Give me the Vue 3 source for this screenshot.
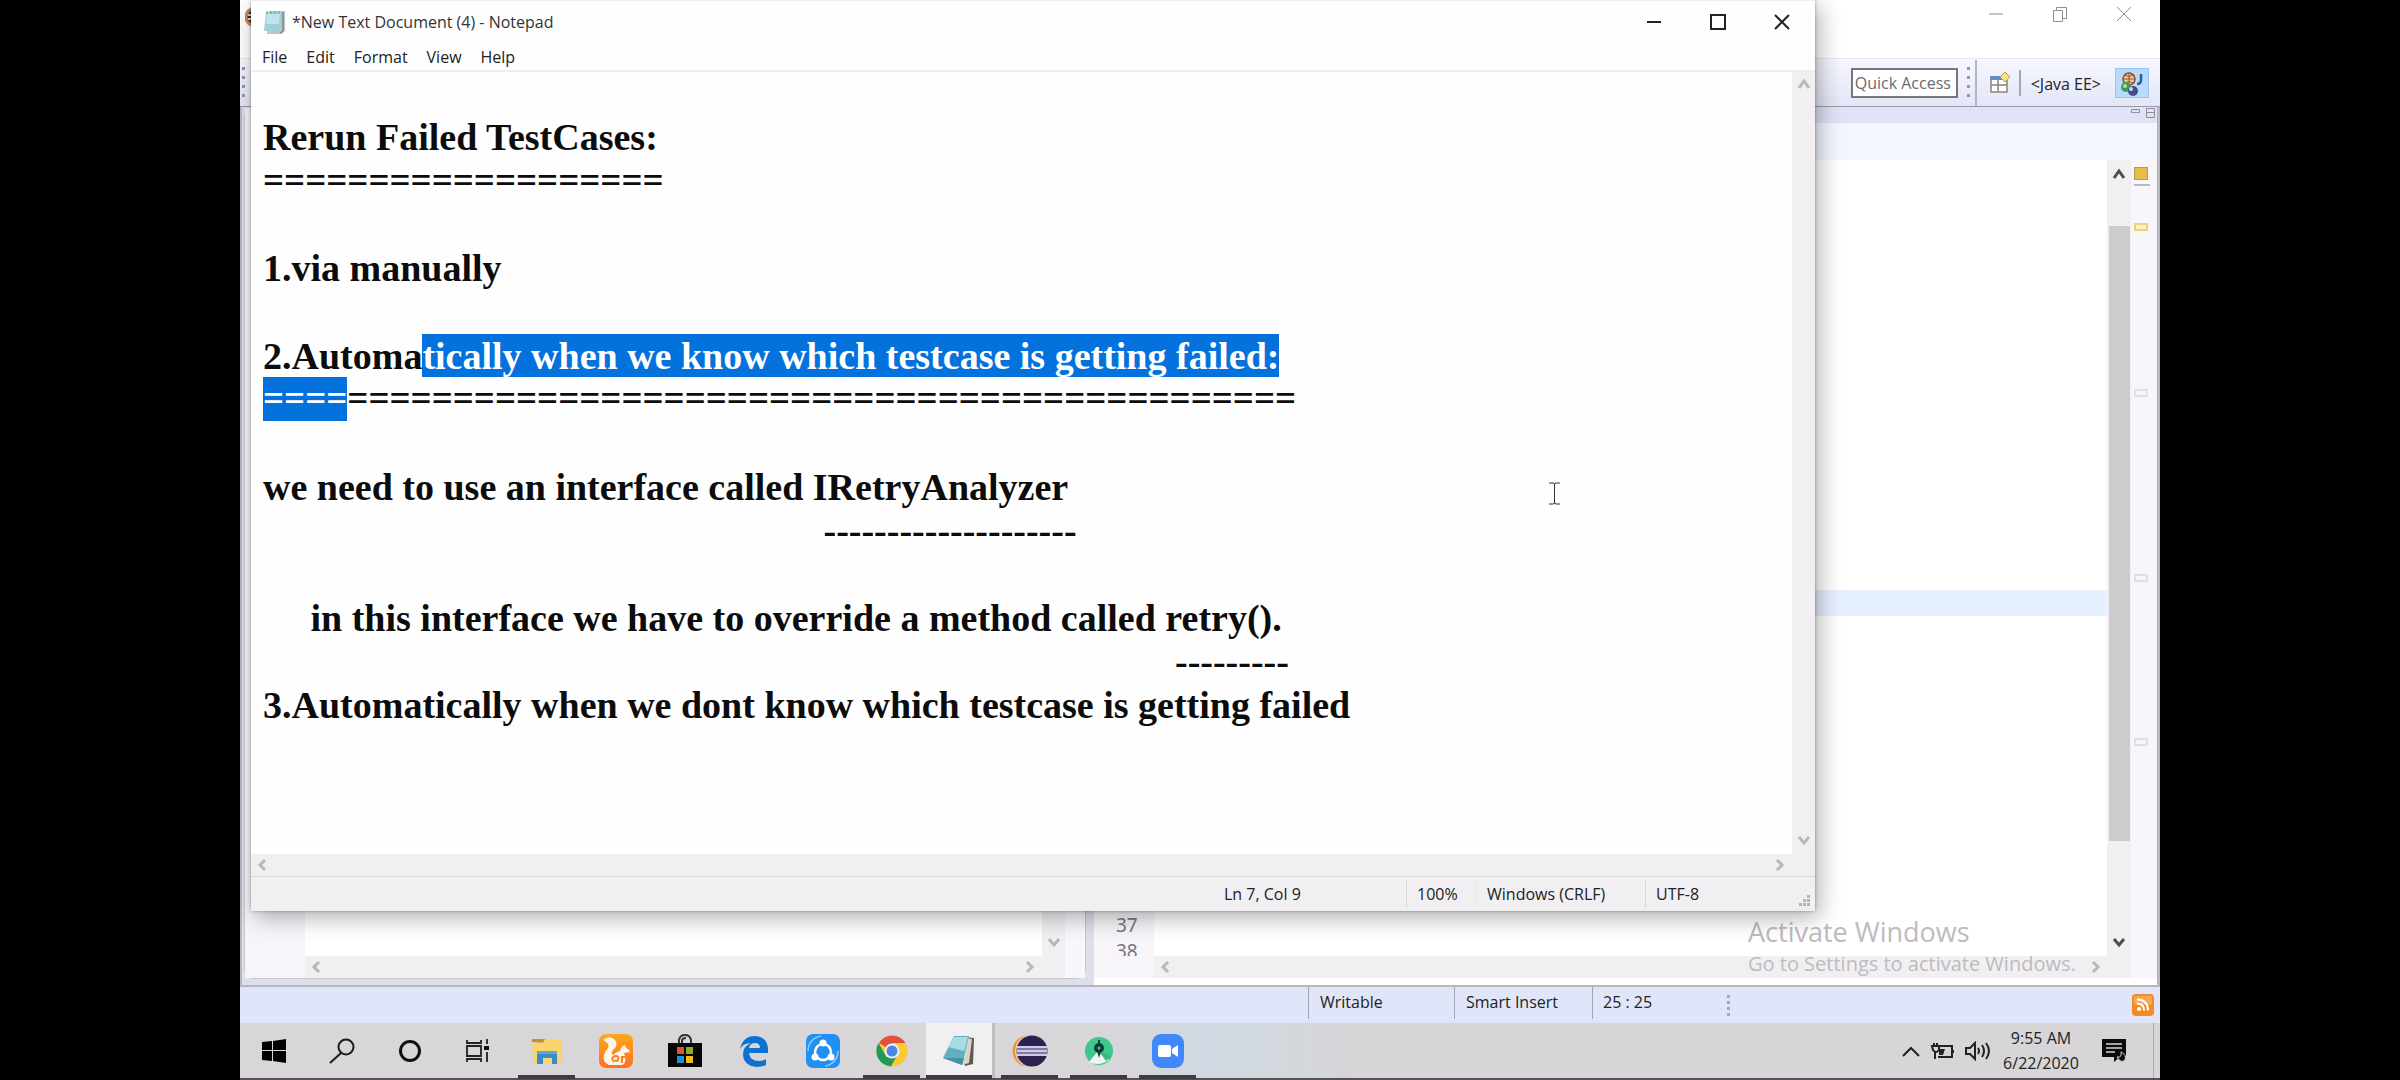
<script setup>
const eq = (n) => '='.repeat(n)
const pad = (n, s) => ' '.repeat(n) + s

const lines = [
  [],
  [{ t: 'Rerun Failed TestCases:' }],
  [{ t: eq(19), rule: true }],
  [],
  [{ t: '1.via manually' }],
  [],
  [{ t: '2.Automa' }, { t: 'tically when we know which testcase is getting failed:', sel: true }],
  [{ t: eq(4), sel: true, rule: true }, { t: eq(45), rule: true }],
  [],
  [{ t: 'we need to use an interface called IRetryAnalyzer' }],
  [{ t: pad(59, '-'.repeat(20)) }],
  [],
  [{ t: pad(5, 'in this interface we have to override a method called retry().') }],
  [{ t: pad(96, '-'.repeat(9)) }],
  [{ t: '3.Automatically when we dont know which testcase is getting failed' }],
  [],
  [],
]
const menus = ['File', 'Edit', 'Format', 'View', 'Help']
</script>

<template>
  <div class="page">
    <div class="desktop">
      <!-- IDE window -->
      <section class="ide">
        <header class="ide-title">
          <svg class="ide-logo" width="20" height="22" viewBox="0 0 20 22"><circle cx="10" cy="11" r="9" fill="#3a2a3c" stroke="#c98a4e" stroke-width="3" /><path d="M3 9h14M3 13h14" stroke="#d9cdd8" stroke-width="2" /></svg>
          <span class="grow"></span>
          <button class="ctl" aria-label="Minimize"><svg width="16" height="16"><path d="M1 8h14" /></svg></button>
          <button class="ctl" aria-label="Restore"><svg width="16" height="16"><path d="M1.500 4.500h9v11h-9zM4.500 4V1.500h10v11H11" /></svg></button>
          <button class="ctl" aria-label="Close"><svg width="16" height="16"><path d="M1 1l14 14M15 1L1 15" /></svg></button>
        </header>
        <div class="ide-tools">
          <span class="strip-dots left-dots"></span>
          <span class="grow"></span>
          <input class="quick" type="text" placeholder="Quick Access" aria-label="Quick Access" />
          <span class="strip-dots"></span>
          <span class="tool-edge"></span>
          <button class="tool" aria-label="Open Perspective">
            <svg width="22" height="24" viewBox="0 0 22 24">
              <path d="M2 6h16v15H2z" fill="#fff" stroke="#8a8578" stroke-width="1.500" />
              <path d="M1 5h14v4H1z" fill="#5f8fc4" />
              <path d="M2 14h16M9 9v12" stroke="#8a8578" stroke-width="1.500" />
              <path d="M16 1l5 5-5 5-5-5z" fill="#f6e48b" stroke="#b99b3a" />
            </svg>
          </button>
          <span class="tool-sep"></span>
          <button class="tool persp">&lt;Java EE&gt;</button>
          <button class="tool active" aria-label="Java">
            <svg width="26" height="28" viewBox="0 0 26 28">
              <circle cx="10" cy="10" r="6" fill="#e9c9a0" stroke="#8b4a30" stroke-width="1.500" />
              <path d="M4 10h12M10 4v12M6 6q4 3 8 0M6 14q4-3 8 0" fill="none" stroke="#a5522f" />
              <circle cx="7" cy="18" r="5" fill="#3f9a58" /><circle cx="6" cy="17" r="2" fill="#a8dfae" />
              <path d="M22 5v6q0 4-4 4" fill="none" stroke="#2f5f97" stroke-width="2.500" />
              <circle cx="14" cy="22" r="5" fill="#3d4f86" /><circle cx="12" cy="20" r="2" fill="#cfd8f0" />
            </svg>
          </button>
        </div>
        <div class="ide-main">
          <div class="pane side">
            <div class="pane-view">
              <div class="gutter"></div>
              <div class="sheet"></div>
              <div class="vbar"><span class="grow"></span><svg class="chev" width="14" height="14"><path d="M2 4l5 6 5-6" /></svg></div>
              <div class="edge"></div>
            </div>
            <div class="pane-foot">
              <div class="gutter"></div>
              <div class="hbar">
                <svg class="chev" width="14" height="14"><path d="M9 2L4 7l5 5" /></svg>
                <svg class="chev" width="14" height="14"><path d="M5 2l5 5-5 5" /></svg>
              </div>
              <div class="corner"></div>
              <div class="edge"></div>
            </div>
          </div>
          <div class="pane editor">
            <div class="tabs">
              <svg width="28" height="12"><path d="M2.500 2.500h8v3h-8zM17.500 1.500h8v9h-8zM17.500 5.500h8" /></svg>
            </div>
            <div class="subtabs"></div>
            <div class="pane-view">
              <div class="gutter nums"><span>37</span><span>38</span></div>
              <div class="sheet"><div class="current"></div></div>
              <div class="vbar wide">
                <svg class="chev dark" width="14" height="14"><path d="M2 11l5-7 5 7" /></svg>
                <div class="thumb"></div>
                <svg class="chev dark" width="14" height="14"><path d="M2 4l5 6 5-6" /></svg>
              </div>
              <div class="marks">
                <i class="warn"></i><i class="rule"></i><i class="mk hot"></i><i class="mk m2"></i><i class="mk m3"></i><i class="mk m4"></i>
              </div>
            </div>
            <div class="pane-foot">
              <div class="gutter"></div>
              <div class="hbar">
                <svg class="chev" width="14" height="14"><path d="M9 2L4 7l5 5" /></svg>
                <svg class="chev" width="14" height="14"><path d="M5 2l5 5-5 5" /></svg>
              </div>
              <div class="corner"></div>
              <div class="edge"></div>
            </div>
          </div>
        </div>
        <footer class="ide-status">
          <span class="cell writable">Writable</span>
          <span class="cell insert">Smart Insert</span>
          <span class="cell pos">25 : 25</span>
          <span class="strip-dots"></span>
          <span class="grow"></span>
          <svg width="22" height="22" viewBox="0 0 22 22">
            <rect width="22" height="22" rx="4" fill="#f28c22" /><rect x="2" y="2" width="18" height="9" rx="2" fill="#f8a850" />
            <circle cx="7" cy="15" r="2" fill="#fff" />
            <path d="M5 9.500q7 0 7 7M5 5.500q11 0 11 11" fill="none" stroke="#fff" stroke-width="2" />
          </svg>
        </footer>
      </section>

      <div class="watermark">
        <p class="wm-big">Activate Windows</p>
        <p class="wm-small">Go to Settings to activate Windows.</p>
      </div>

      <!-- Notepad window -->
      <section class="notepad">
        <header class="np-title">
          <svg width="24" height="26" viewBox="0 0 24 26">
            <path d="M6 2h16v20l-3 3H4z" fill="#b9c6c8" /><path d="M3 3h16l-2 19H1z" fill="#9fd0da" />
            <path d="M4 5h13l-1 10H3z" fill="#c0e4ea" /><path d="M20 3v19l-3 2" fill="none" stroke="#5d6d70" />
            <path d="M4 2v3M8 2v3M12 2v3M16 2v3" stroke="#7a9298" />
          </svg>
          <h1>*New Text Document (4) - Notepad</h1>
          <span class="grow"></span>
          <button class="ctl" aria-label="Minimize"><svg width="16" height="16"><path d="M1 8h14" /></svg></button>
          <button class="ctl" aria-label="Maximize"><svg width="16" height="16"><path d="M1 1h14v14H1z" /></svg></button>
          <button class="ctl" aria-label="Close"><svg width="16" height="16"><path d="M1 1l14 14M15 1L1 15" /></svg></button>
        </header>
        <nav class="np-menu"><button v-for="m in menus" :key="m">{{ m }}</button></nav>
        <div class="np-body">
          <div class="np-text">
            <div v-for="(line, i) in lines" :key="i" class="line"><span v-for="(s, j) in line" :key="j" :class="{ sel: s.sel, eq: s.rule }">{{ s.t }}</span></div>
          </div>
          <div class="np-vbar">
            <svg class="chev" width="14" height="14"><path d="M2 11l5-7 5 7" /></svg>
            <svg class="chev" width="14" height="14"><path d="M2 4l5 6 5-6" /></svg>
          </div>
        </div>
        <div class="np-hbar">
          <svg class="chev" width="14" height="14"><path d="M9 2L4 7l5 5" /></svg>
          <svg class="chev" width="14" height="14"><path d="M5 2l5 5-5 5" /></svg>
        </div>
        <footer class="np-status">
          <span class="c1">Ln 7, Col 9</span><span class="c2">100%</span><span class="c3">Windows (CRLF)</span><span class="c4">UTF-8</span>
          <svg class="grip" width="12" height="12" fill="#b5b3b6"><path d="M8 0h3v3H8zM4 4h3v3H4zM8 4h3v3H8zM0 8h3v3H0zM4 8h3v3H4zM8 8h3v3H8z" /></svg>
        </footer>
        <svg class="ibeam" width="11" height="23"><path d="M0 1h4M7 1h4M0 22h4M7 22h4M4 1q1.500 0 1.500 2v17q0 2-1.500 2M7 1q-1.500 0-1.500 2v17q0 2 1.500 2" /></svg>
      </section>

      <!-- Taskbar -->
      <footer class="taskbar">
        <button class="tb sys" aria-label="Start"><svg width="24" height="24" viewBox="0 0 24 24"><path d="M0 3l10-1v9H0zM11 2l13-2v11H11zM0 12h10v10L0 21zM11 12h13v12l-13-2z" /></svg></button>
        <button class="tb sys" aria-label="Search"><svg width="26" height="26" viewBox="0 0 26 26" fill="none" stroke="#1c1c1c" stroke-width="2"><circle cx="17" cy="9" r="7.500" /><path d="M12 15L1 25" /></svg></button>
        <button class="tb sys" aria-label="Cortana"><svg width="24" height="24" viewBox="0 0 24 24"><circle cx="12" cy="12" r="9.500" fill="none" stroke="#111" stroke-width="3" /></svg></button>
        <button class="tb sys" aria-label="Task View"><svg width="24" height="24" viewBox="0 0 24 24" fill="none" stroke="#222" stroke-width="1.800"><path d="M1 7h14v10H1zM1 1v3h14V1M1 23v-3h14v3M21 0v5M21 13v10" /><path d="M18 7h5v4h-5z" fill="#111" stroke="none" /></svg></button>
        <button class="tb open" aria-label="File Explorer">
          <svg width="32" height="28" viewBox="0 0 32 28"><path d="M1 5V3q0-1 1-1h13v4z" fill="#c58f2a" /><path d="M14 2h17v24H3L1 6h11z" fill="#fbd56b" /><path d="M6 15q0-1 1-1h18q1 0 1 1v12h-5v-6h-9v6H6z" fill="#3a8bc7" /><path d="M6 14h20v3H6z" fill="#58a8de" /></svg>
        </button>
        <button class="tb" aria-label="UC Browser">
          <svg width="34" height="34" viewBox="0 0 34 34"><defs><linearGradient id="uc" x1="0" y1="0" x2="0" y2="1"><stop offset="0" stop-color="#fba91d" /><stop offset="1" stop-color="#ff7021" /></linearGradient></defs><rect width="34" height="34" rx="7" fill="url(#uc)" /><path d="M4 6q6-5 11-1 5 5 0 10-4 4-1 6 3-3 7-4 1-5 5-6l1 3q3 1 4 4l-6 1q3 7 0 11l-2 1H10q-7-3-5-10 1-4 4-7 2-5-5-8z" fill="#fff4e6" /><path d="M15 28q-4-4 1-6 5 0 3 4-2 2-3 0M23 29v-6h3" fill="none" stroke="#f77f24" stroke-width="2" /></svg>
        </button>
        <button class="tb" aria-label="Microsoft Store">
          <svg width="34" height="34" viewBox="0 0 34 34"><path d="M11 10V6q1-5 6-5t6 5v4M14 10V7q0-3 4-3" fill="none" stroke="#333" stroke-width="2" /><path d="M0 9h34v24H0z" fill="#060606" /><path d="M9 13h7v7H9z" fill="#e2552b" /><path d="M18 13h7v7h-7z" fill="#8fae1b" /><path d="M9 22h7v7H9z" fill="#1a92da" /><path d="M18 22h7v7h-7z" fill="#f4b91a" /></svg>
        </button>
        <button class="tb" aria-label="Edge">
          <svg width="30" height="32" viewBox="0 0 30 32"><path d="M1 14Q4 1 16 1q13 1 13 14v3H10q1 8 10 8 4 0 7-2v6q-4 2-9 2Q5 31 4 20 4 11 12 8 4 8 1 14zM10 13h11q0-5-5-5-5 0-6 5z" fill="#0b72cf" fill-rule="evenodd" /></svg>
        </button>
        <button class="tb" aria-label="SHAREit">
          <svg width="34" height="34" viewBox="0 0 34 34"><rect width="34" height="34" rx="7" fill="#2190f3" /><path d="M2 17A15 15 0 0 1 15 2M32 17a15 15 0 0 1-13 15" fill="none" stroke="#8fcaff" stroke-width="1.500" /><circle cx="17" cy="18" r="8" fill="none" stroke="#fff" stroke-width="2.500" /><g fill="#fff"><circle cx="17" cy="9" r="3.500" /><circle cx="9" cy="23" r="3.500" /><circle cx="25" cy="23" r="3.500" /></g></svg>
        </button>
        <button class="tb open" aria-label="Chrome">
          <svg width="32" height="32" viewBox="0 0 32 32"><circle cx="16" cy="16" r="15.500" fill="#fcc934" /><path d="M16 16L3 8A15.500 15.500 0 0 1 29.500 8H16z" fill="#e2513f" /><path d="M2.500 8l8 14 5 9.400A15.500 15.500 0 0 1 2.500 8z" fill="#22995a" /><path d="M22 19l-7 12.500L10 22z" fill="#22995a" /><circle cx="16" cy="16" r="7.500" fill="#f1f1f1" /><circle cx="16" cy="16" r="5.500" fill="#4a86ec" /></svg>
        </button>
        <button class="tb open current-app" aria-label="Notepad">
          <svg width="34" height="34" viewBox="0 0 34 34"><path d="M13 2l19 2-1 26-8 2z" fill="#5f5a50" /><path d="M14 2l16 3-3 24-7 2z" fill="#d8d4c8" /><path d="M12 2h15l-7 29-19-7z" fill="#62b0bf" /><path d="M12 3h14l-4 14-16-4z" fill="#a8dbe2" /><path d="M1 24l19 7 2-7z" fill="#3f93a4" /></svg>
        </button>
        <button class="tb open" aria-label="Eclipse">
          <svg width="36" height="34" viewBox="0 0 36 34"><circle cx="16" cy="17" r="15.500" fill="#f2932a" /><circle cx="19" cy="17" r="16" fill="#e9d7cf" /><circle cx="20" cy="17" r="15.500" fill="#2b2250" /><path d="M5 12h30v10H5z" fill="#cfcbe4" /><path d="M5 15h30M5 19h30" stroke="#665f94" stroke-width="1.500" /></svg>
        </button>
        <button class="tb open" aria-label="Android Studio">
          <svg width="30" height="30" viewBox="0 0 30 30"><circle cx="15" cy="15" r="14" fill="#3cc98a" /><path d="M13 16L5 26q10 5 20-2z" fill="#eef4f1" /><path d="M15 15l7 10 5-5z" fill="#35b97f" /><circle cx="15" cy="12" r="5" fill="#0d3c38" /><circle cx="15" cy="12" r="1.500" fill="#3cc98a" /><path d="M14 4h2v5h-2zM13 15h4l-2 7z" fill="#0d3c38" /></svg>
        </button>
        <button class="tb open" aria-label="Zoom">
          <svg width="32" height="34" viewBox="0 0 32 34"><rect width="32" height="34" rx="9" fill="#4088fb" /><rect x="6" y="11" width="13" height="12" rx="2" fill="#fff" /><path d="M20 15l6-4v12l-6-4z" fill="#fff" /></svg>
        </button>
        <span class="grow"></span>
        <div class="tray">
          <svg width="18" height="12" class="line-ico"><path d="M1 11l8-8 8 8" /></svg>
          <svg width="25" height="18" viewBox="0 0 25 18" class="line-ico"><path d="M9 4h13v11H8M23 8v3M4 1v3M7 1v3M2 4h7v4q-3 4-6 0zM5 10v7" /><path d="M9 7h6l-2 6H9z" fill="#222" stroke="none" /></svg>
          <svg width="26" height="20" viewBox="0 0 26 20" class="line-ico"><path d="M1 7h4l5-5v16l-5-5H1zM13 7q2 3 0 6M17 4q4 6 0 12M21 2q6 8 0 16" /></svg>
          <div class="clock"><span>9:55 AM</span><span>6/22/2020</span></div>
          <svg width="24" height="24" viewBox="0 0 24 24"><path d="M0 0h24v17h-5l-7 6v-5H0z" fill="#0c0c0c" /><path d="M4 5h16M4 9h16M4 13h9" stroke="#d7d5d7" stroke-width="1.500" /><path d="M15 18q5 1 4-5 6 3 4 8-4 4-8-3z" fill="#0c0c0c" stroke="#d7d5d7" /></svg>
        </div>
        <span class="peek"></span>
      </footer>
    </div>
  </div>
</template>

<style>
body { margin: 0; background: #000; }
</style>

<style scoped>
.page { background: #000; display: flex; justify-content: center; font-family: "Open Sans", "Noto Sans", sans-serif; font-size: 16px; color: #222; }
.page *, .page *::before { box-sizing: border-box; }
.desktop { position: relative; width: 80%; min-height: 100vh; display: flex; flex-direction: column; overflow: hidden; background: #fff; }
button { border: 0; background: none; padding: 0; font: inherit; color: inherit; display: flex; align-items: center; justify-content: center; }
.grow { flex: 1; }
svg { display: block; flex: none; }
.chev { fill: none; stroke: #b9b7ba; stroke-width: 3; }
.chev.dark { stroke: #4c4b4e; }

.ide { flex: 1; display: flex; flex-direction: column; background: #fff; }
.ide-title { height: 58px; display: flex; align-items: flex-start; padding-right: 4px; }
.ide-logo { margin: 6px 0 0 5px; }
.ctl { width: 64px; height: 28px; }
.ctl svg { fill: none; stroke: #8f8e90; stroke-width: 1px; }
.ide-tools { height: 49px; display: flex; align-items: center; background: linear-gradient(#f6f7fe, #e4e6f7); border-top: 1px solid #e6e6ec; border-bottom: 1px solid #9b9cab; padding-right: 11px; }
.strip-dots { width: 3px; height: 32px; background: repeating-linear-gradient(#9495a8 0 3px, transparent 3px 9px); }
.left-dots { margin-left: 2px; }
.quick { width: 107px; height: 30px; border: 2px solid #77767c; background: #fff; padding: 0 2px; font-family: inherit; font-size: 16px; margin-right: 9px; }
.quick::placeholder { color: #6b6a6e; opacity: 1; }
.tool-edge { width: 2px; height: 46px; background: #b4b5c2; margin: 0 12px 0 5px; }
.tool { height: 30px; }
.tool-sep { width: 2px; height: 26px; background: #a5a6b4; margin: 0 10px 0 8px; }
.persp { margin-right: 14px; padding-top: 2px; }
.active { width: 34px; background: #b9dafb; border: 1px solid #94c4f4; }

.ide-main { flex: 1; display: flex; background: #dfdfec; border: solid #b7b7bd; border-width: 0 3px 2px 2px; padding: 0 0 6px; background-clip: padding-box; }
.pane { display: flex; flex-direction: column; background: #fff; }
.side { width: 842px; border: 1px solid #c6c5cb; border-radius: 10px 0 10px 10px; margin: 0 8px 0 2px; }
.editor { flex: 1; margin-bottom: -6px; padding-bottom: 7px; }
.pane-view { flex: 1; display: flex; }
.pane-foot { display: flex; height: 22px; }
.gutter { width: 60px; background: #f7f5f9; overflow: hidden; }
.nums { display: flex; flex-direction: column; justify-content: flex-end; align-items: flex-start; padding-left: 22px; font-family: "Noto Sans", sans-serif; font-size: 19px; line-height: 26px; color: #77767a; }
.nums span:last-child { height: 18px; overflow: hidden; }
.sheet { flex: 1; background: #fff; }
.current { margin-top: 430px; height: 26px; background: #e7f0fe; }
.vbar { width: 23px; background: #f1eff2; display: flex; flex-direction: column; align-items: center; padding: 7px 0; }
.wide { width: 24px; }
.thumb { flex: 1; width: 21px; margin: 45px 0 94px; background: #cdcbce; }
.marks { width: 26px; background: #f8f6fa; display: flex; flex-direction: column; align-items: flex-start; padding: 7px 0 0 3px; }
.marks i { display: block; width: 14px; height: 8px; flex: none; }
.marks .warn { height: 13px; background: #e9bd45; border: 1px solid #b99b52; }
.marks .rule { width: 16px; height: 2px; background: #b9b7bd; margin-top: 4px; }
.marks .mk { border: 2px solid #e1dfe4; }
.marks .hot { border-color: #ecd27c; background: #fdf3c4; margin-top: 37px; }
.marks .m2 { margin-top: 158px; }
.marks .m3 { margin-top: 177px; }
.marks .m4 { margin-top: 156px; }
.side .edge { width: 20px; background: #f8f7fb; }
.editor .edge { width: 26px; background: #f8f6fa; }
.hbar { flex: 1; background: #f1eff2; display: flex; align-items: center; justify-content: space-between; padding: 0 5px; }
.corner { width: 24px; background: #f1eff2; }
.tabs { height: 16px; background: #e0e3f6; display: flex; justify-content: flex-end; }
.tabs svg { fill: none; stroke: #8e8f9b; }
.subtabs { height: 37px; background: #f3f6fe; }
.ide-status { height: 36px; background: #e1e5f9; display: flex; align-items: center; justify-content: flex-end; padding-right: 6px; padding-left: 1068px; }
.cell { height: 32px; margin-bottom: 4px; line-height: 30px; border-left: 1px solid #a3a5b4; padding-left: 11px; white-space: nowrap; }
.writable { width: 146px; }
.insert { width: 138px; }
.pos { width: 135px; padding-left: 10px; }
.ide-status .strip-dots { height: 21px; background: repeating-linear-gradient(#a6a8b8 0 3px, transparent 3px 6px); }

.watermark { position: absolute; right: 77px; bottom: 102px; width: 335px; color: #bdbbbe; }
.watermark p { margin: 0; white-space: nowrap; }
.wm-big { font-size: 27px; line-height: 36px; }
.wm-small { font-size: 20px; line-height: 28px; }

.notepad { position: absolute; top: 0; left: 11px; right: 345px; bottom: 169px; display: flex; flex-direction: column; background: #fefefe; box-shadow: 0 0 3px rgba(0, 0, 0, .35), 4px 6px 22px rgba(0, 0, 0, .32); border-top: 1px solid #eeecef; }
.np-title { height: 42px; display: flex; align-items: center; padding-left: 12px; padding-right: 1px; }
.np-title h1 { margin: 0 0 0 5px; font-size: 16px; font-weight: 400; color: #333; }
.notepad .ctl svg { stroke: #222; stroke-width: 2px; }
.np-title .ctl { height: 42px; }
.np-menu { height: 29px; display: flex; gap: 19px; align-items: center; padding-left: 11px; border-bottom: 2px solid #efedf0; }
.np-body { flex: 1; display: flex; min-height: 0; }
.np-text { flex: 1; min-width: 0; overflow: hidden; display: flex; flex-direction: column; padding: 0 0 40px 12px; font: bold 38px/42px "Liberation Serif", serif; color: #0c0c0c; }
.line { flex: 1; display: flex; align-items: stretch; white-space: pre; }
.line span { display: flex; align-items: center; }
.line .eq { font-size: 37px; }
.sel { background: #0472dc; color: #fff; }
.np-vbar { width: 23px; background: #f1eff2; display: flex; flex-direction: column; align-items: center; justify-content: space-between; padding: 5px 0 7px; }
.np-hbar { height: 22px; background: #f1eff2; display: flex; align-items: center; justify-content: space-between; padding: 0 29px 0 5px; }
.np-status { height: 35px; background: #f1eff2; border-top: 1px solid #dcdadd; display: flex; align-items: center; justify-content: flex-end; position: relative; }
.np-status span { height: 28px; line-height: 28px; white-space: nowrap; padding-left: 10px; border-left: 1px solid #dbd9dc; }
.np-status .c1 { width: 192px; border: 0; }
.np-status .c2 { width: 70px; }
.np-status .c3 { width: 169px; border-color: #e9e7ea; }
.np-status .c4 { width: 170px; }
.grip { position: absolute; right: 4px; bottom: 4px; }
.ibeam { position: absolute; left: 83%; top: 481px; fill: none; stroke: #333; }

.taskbar { height: 57px; display: flex; background: linear-gradient(90deg, #d8d6d9 0, #d8d6d9 45%, #d1d8e2 50%, #d2d8dd 54%, #d6d5d7 58%, #d7d5d8 100%); border-bottom: 2px solid #545055; }
.tb { position: relative; width: 69px; height: 55px; }
.tb.sys { width: 68px; }
.open::before { content: ""; position: absolute; left: 6px; right: 6px; bottom: -1px; height: 4px; background: #3f3b40; }
.current-app { background: #f0eff1; border-right: 3px solid #bfbdc0; }
.current-app::before { left: 0; right: 0; }
.tray { display: flex; align-items: center; gap: 10px; }
.line-ico { fill: none; stroke: #222; stroke-width: 2px; }
.clock { display: flex; flex-direction: column; align-items: center; width: 80px; line-height: 25px; margin-right: 11px; }
.peek { width: 7px; border-left: 1px solid #aaa8ab; margin-left: 27px; }
</style>
